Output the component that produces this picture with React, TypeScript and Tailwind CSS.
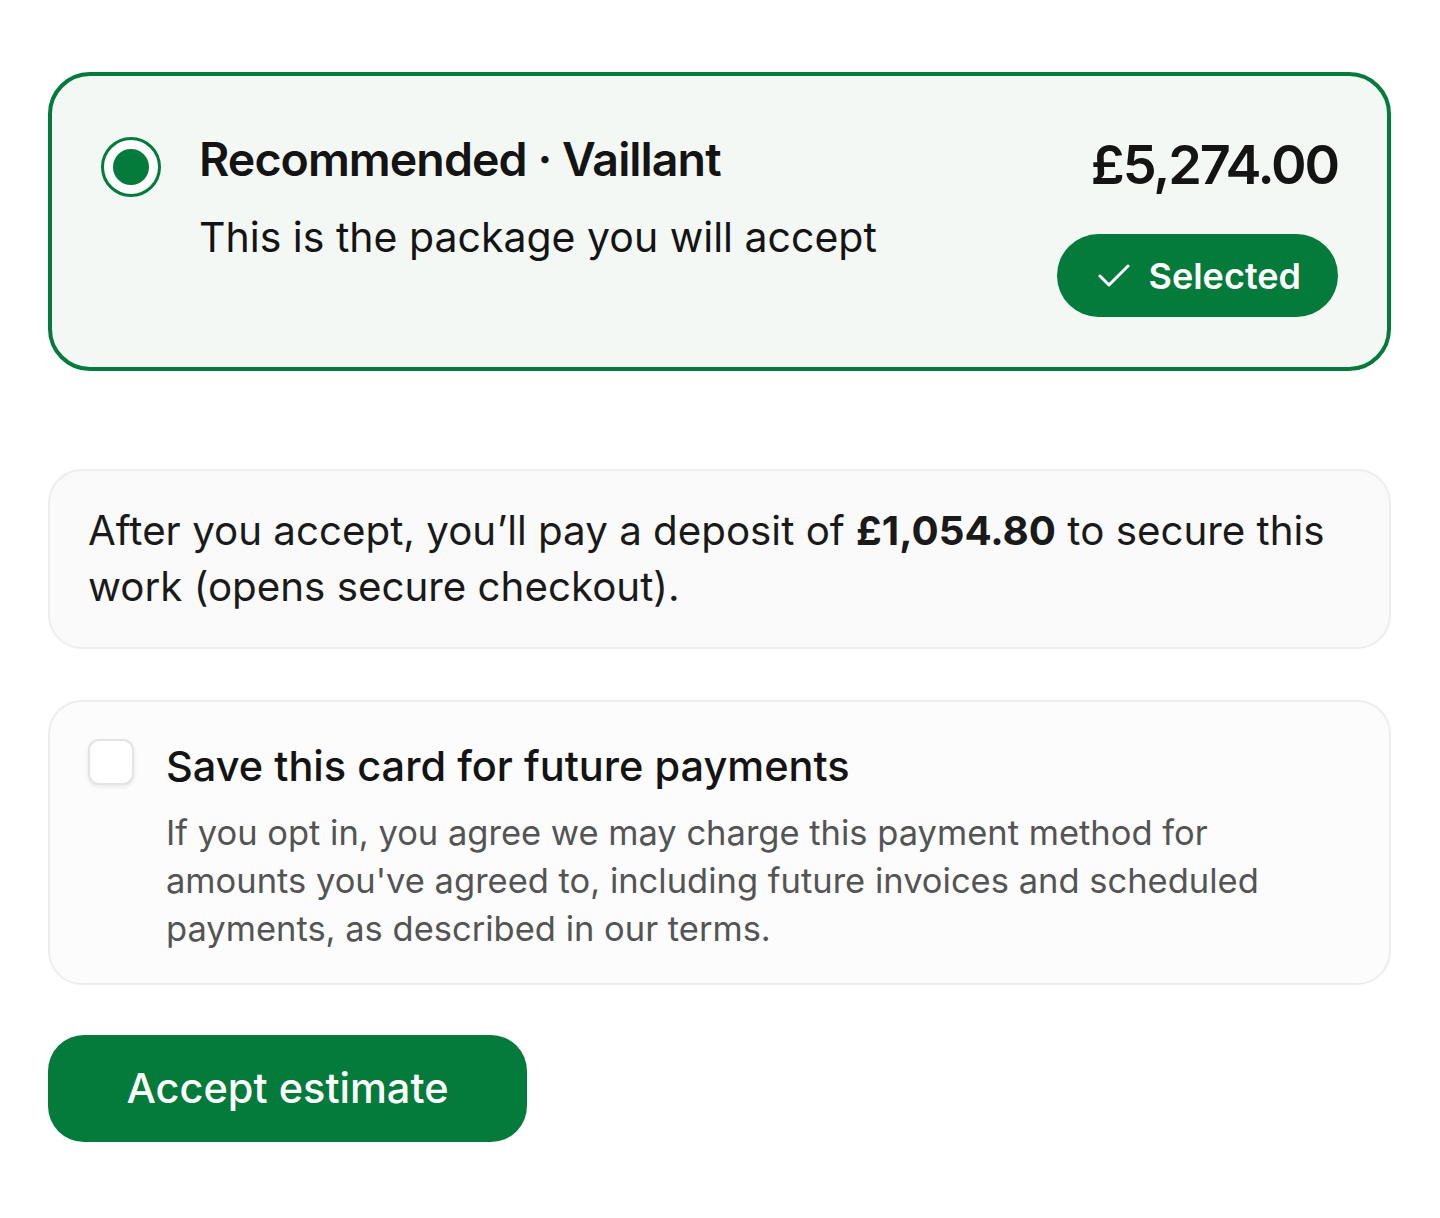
export default function App() {
    return (
        <div
            className="min-h-screen bg-white px-12 pt-[72px] pb-10"
            style={{ fontFamily: 'Inter, "Noto Sans", sans-serif' }}
        >
            <div className="w-[1343px]">
                {/* selected package */}
                <div className="flex justify-between rounded-[42px] border-4 border-[#047a3b] bg-[#f3f8f5] pl-[49px] pr-[49px] pt-[60px] pb-[50px]">
                    <div className="flex gap-[38px]">
                        <div className="mt-[1px] flex h-[60px] w-[60px] shrink-0 items-center justify-center rounded-full border-[3px] border-[#047a3b] bg-white">
                            <div className="h-[36px] w-[36px] rounded-full bg-[#047a3b]" />
                        </div>
                        <div className="-mt-[6px]">
                            <div className="text-[46.5px] font-semibold leading-[58px] tracking-[-0.02em] text-[#141414]">
                                Recommended · Vaillant
                            </div>
                            <div className="mt-[24px] text-[41px] leading-[50px] text-[#141414]">
                                This is the package you will accept
                            </div>
                        </div>
                    </div>
                    <div className="-mt-[3px] flex flex-col items-end">
                        <div className="text-[54px] font-semibold leading-[64px] tracking-[-0.04em] text-[#141414]">
                            £5,274.00
                        </div>
                        <button className="mt-[37px] flex h-[83px] items-center gap-[19px] rounded-full bg-[#047a3b] pl-[41px] pr-[37px] text-[36px] font-semibold text-white">
                            <svg width="32" height="24" viewBox="0 0 32 24" fill="none">
                                <polyline
                                    points="2,12 11,21 30,2"
                                    stroke="white"
                                    strokeWidth="3"
                                    strokeLinecap="round"
                                    strokeLinejoin="round"
                                />
                            </svg>
                            Selected
                        </button>
                    </div>
                </div>

                {/* deposit note */}
                <div className="mt-[98px] rounded-[34px] border-2 border-[#ededed] bg-[#fafafa] px-[38px] py-[32px]">
                    <p className="text-[40.3px] leading-[56px] text-[#1a1a1a]">
                        After you accept, you’ll pay a deposit of{' '}
                        <span className="font-bold">£1,054.80</span> to secure this work (opens secure
                        checkout).
                    </p>
                </div>

                {/* save card */}
                <div className="mt-[51px] flex gap-[32px] rounded-[34px] border-2 border-[#ededed] bg-[#fcfcfc] px-[38px] pt-[37px] pb-[30px]">
                    <div className="h-[46px] w-[46px] shrink-0 rounded-[11px] border-2 border-[#e4e4e4] bg-white shadow-[0_2px_4px_rgba(0,0,0,0.08)]" />
                    <div>
                        <div className="text-[41.5px] font-medium leading-[54px] text-[#141414]">
                            Save this card for future payments
                        </div>
                        <p className="mt-[16px] max-w-[1140px] text-[34.5px] leading-[48px] text-[#545454]">
                            If you opt in, you agree we may charge this payment method for amounts you've
                            agreed to, including future invoices and scheduled payments, as described in our
                            terms.
                        </p>
                    </div>
                </div>

                <button className="mt-[50px] flex h-[107px] w-[479px] items-center justify-center rounded-[36px] bg-[#047a3b] text-[41.5px] font-medium text-white">
                    Accept estimate
                </button>
            </div>
        </div>
    );
}
